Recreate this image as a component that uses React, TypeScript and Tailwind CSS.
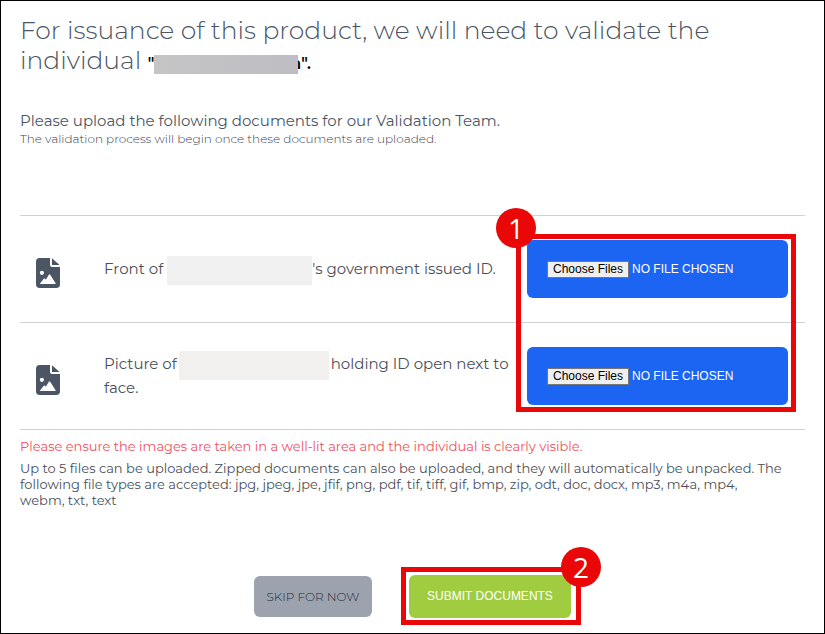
import type { ReactNode } from 'react';

function FileImageIcon() {
  return (
    <svg viewBox="0 0 24 30" className="mt-2 h-[30px] w-6 shrink-0" aria-hidden="true">
      <path
        fill="#4b5563"
        fillRule="evenodd"
        d="M3.8 0H14v7a2 2 0 0 0 2 2h8v17.2A3.8 3.8 0 0 1 20.2 30H3.8A3.8 3.8 0 0 1 0 26.2V3.8A3.8 3.8 0 0 1 3.8 0ZM5.9 12.7a2.1 2.1 0 1 0 0 4.2 2.1 2.1 0 0 0 0-4.2ZM4.4 26H19.3q.7 0 .3-.7L14.2 16.7q-.7-.9-1.4 0L9.9 21.8 9.1 20.8q-.7-.7-1.3 0L4.2 25.3q-.4.7.2.7Z"
      />
      <path fill="#4b5563" d="M16 .3 23.6 7H16Z" />
    </svg>
  );
}

function Redacted({ className }: { className: string }) {
  return <span aria-hidden="true" className={`relative inline-block align-middle ${className}`} />;
}

function StepBadge({ children }: { children: ReactNode }) {
  return (
    <span className="absolute flex size-10 items-center justify-center rounded-full bg-[#e90707] font-['Open_Sans',sans-serif] text-[28px] leading-none font-normal text-white">
      {children}
    </span>
  );
}

type UploadRowProps = {
  id: string;
  children: ReactNode;
};

function UploadRow({ id, children }: UploadRowProps) {
  return (
    <li className="flex items-center border-b border-[#d1d1db] py-6 pr-[17px] pl-4">
      <FileImageIcon />
      <label htmlFor={id} className="ml-11 min-w-0 flex-1 text-[15px] leading-6 font-normal text-[#4b4f58]">
        {children}
      </label>
      <input
        id={id}
        type="file"
        multiple
        className="ml-3 h-[58px] w-[261px] shrink-0 rounded-md bg-[#1c64f2] px-5 pt-[21px] pb-[19px] font-['Liberation_Sans',sans-serif] text-[12px] leading-[17px] font-normal text-white uppercase file:mr-[3px] file:border file:border-solid file:border-[#767676] file:bg-[#efefef] file:px-[5px] file:text-[12px] file:leading-[15px] file:text-black file:normal-case"
      />
    </li>
  );
}

export default function App() {
  return (
    <main className="min-h-screen w-full border border-black bg-white px-[19px] pt-[14px] pb-2 font-['Montserrat','Inter',sans-serif] font-light text-[#4b5563]">
      <h1 className="text-[25px] leading-[30px]">
        For issuance of this product, we will need to validate the individual{' '}
        <span className="text-base leading-none font-semibold text-black">
          "
          <Redacted className="-mr-2 h-[19px] w-[144px] bg-linear-to-r from-[#c5c5c6] to-[#bdbdc3]" />
          n".
        </span>
      </h1>

      <p className="mt-9 text-[15px] leading-5 font-normal">
        Please upload the following documents for our Validation Team.
      </p>
      <p className="text-[12px] leading-4 text-[#374151]">
        The validation process will begin once these documents are uploaded.
      </p>

      <div className="relative mt-[68px]">
        <ul className="border-t border-[#d1d1db]">
          <UploadRow id="government-id">
            Front of <Redacted className="-my-1 h-[29px] w-[145px] bg-[#f0f0f0]" />
            's government issued ID.
          </UploadRow>
          <UploadRow id="holding-id">
            Picture of <Redacted className="-mx-[2px] -my-1 h-[29px] w-[150px] bg-[#f1f0ee]" /> holding ID open next to
            face.
          </UploadRow>
        </ul>
        <div className="pointer-events-none absolute top-[19px] right-[9px] bottom-[18px] w-[280px] border-[5px] border-[#e90707]">
          <div className="absolute -top-[31px] -left-[25px]">
            <StepBadge>1</StepBadge>
          </div>
        </div>
      </div>

      <p className="mt-2 text-[13px] leading-4 font-normal text-[#f05260]">
        Please ensure the images are taken in a well-lit area and the individual is clearly visible.
      </p>
      <p className="mt-[6px] text-[13px] leading-4 font-normal text-[#4b4f58]">
        Up to 5 files can be uploaded. Zipped documents can also be uploaded, and they will automatically be unpacked.
        The following file types are accepted: jpg, jpeg, jpe, jfif, png, pdf, tif, tiff, gif, bmp, zip, odt, doc, docx,
        mp3, m4a, mp4,
        <br />
        webm, txt, text
      </p>

      <div className="mt-[67px] flex items-center justify-center gap-[37px]">
        <button type="button" className="h-[41px] w-[118px] rounded-md bg-[#9ca3af] text-[12px] text-[#1f2937]">
          SKIP FOR NOW
        </button>
        <div className="relative">
          <button
            type="button"
            className="h-[43px] w-[162px] rounded-md bg-[#9fcd3f] pb-[2px] font-['Liberation_Sans',sans-serif] text-[12px] font-normal text-white"
          >
            SUBMIT DOCUMENTS
          </button>
          <div className="pointer-events-none absolute -top-2 -right-[10px] -bottom-[7px] -left-2 border-[5px] border-[#e90707]">
            <div className="absolute -top-[25px] right-[15px]">
              <StepBadge>2</StepBadge>
            </div>
          </div>
        </div>
      </div>
    </main>
  );
}
